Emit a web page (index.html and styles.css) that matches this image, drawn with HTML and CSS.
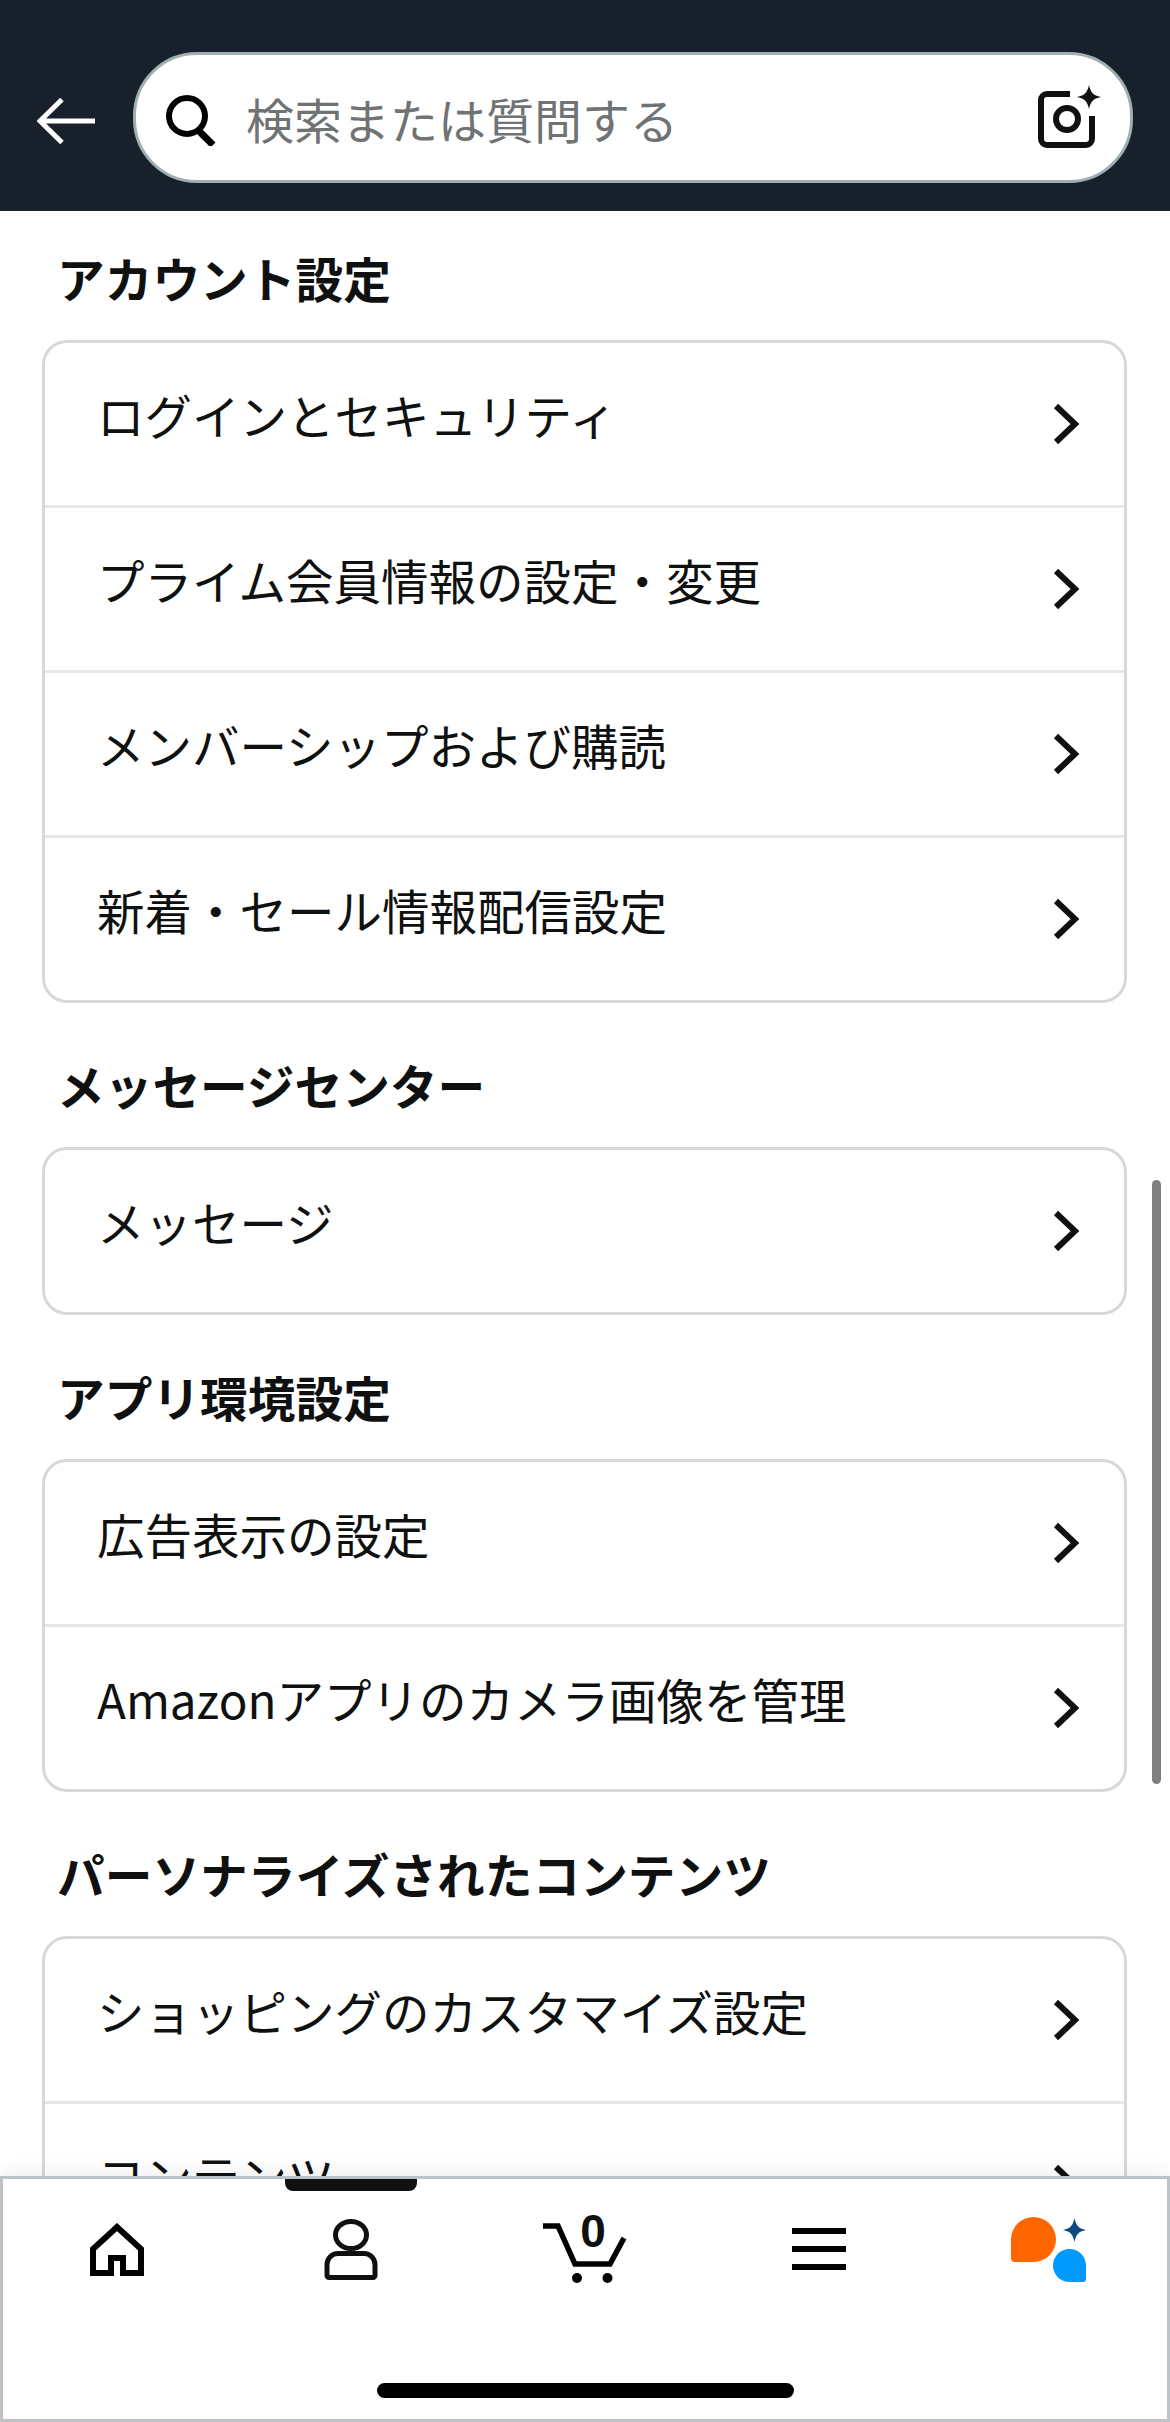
FILE: index.html
```html
<!DOCTYPE html>
<html lang="ja">
<head>
    <meta charset="UTF-8">
    <meta name="viewport" content="width=device-width, initial-scale=1.0">
    <title>アカウント設定</title>
    <link rel="stylesheet" href="styles.css">
</head>
<body>

    <header class="top-bar">
        <svg class="back-icon" viewBox="0 0 58 46" width="58" height="46">
            <path d="M58 23H3M25 1.500 3 23l22 21.500" fill="none" stroke="#fff" stroke-width="5"/>
        </svg>
        <div class="search-box">
            <svg class="search-icon" viewBox="0 0 50 51" width="50" height="51">
                <circle cx="21" cy="21" r="18" fill="none" stroke="#000" stroke-width="6"/>
                <path d="M32 35 47 50" fill="none" stroke="#000" stroke-width="7"/>
            </svg>
            <span class="search-text">検索または質問する</span>
            <svg class="camera-icon" viewBox="0 0 67 67" width="67" height="67">
                <path d="M34 11H11a6 6 0 0 0-6 6V56a6 6 0 0 0 6 6H50a6 6 0 0 0 6-6V33" fill="none" stroke="#0f1111" stroke-width="6"/>
                <circle cx="31" cy="36" r="11" fill="none" stroke="#0f1111" stroke-width="6"/>
                <path d="M53 2c1.500 7 4 10.500 12 12-8 1.500-10.500 5-12 12-1.500-7-4-10.500-12-12 8-1.500 10.500-5 12-12z" fill="#0f1111"/>
            </svg>
        </div>
    </header>

    <main class="content">
        <h2 class="section-title">アカウント設定</h2>
        <div class="card">
            <a class="row"><span class="row-label">ログインとセキュリティ</span><svg class="chevron" viewBox="0 0 28 42"><path d="M4 3l19 18L4 39" fill="none" stroke="#0f1111" stroke-width="6"/></svg></a>
            <a class="row"><span class="row-label">プライム会員情報の設定・変更</span><svg class="chevron" viewBox="0 0 28 42"><path d="M4 3l19 18L4 39" fill="none" stroke="#0f1111" stroke-width="6"/></svg></a>
            <a class="row"><span class="row-label">メンバーシップおよび購読</span><svg class="chevron" viewBox="0 0 28 42"><path d="M4 3l19 18L4 39" fill="none" stroke="#0f1111" stroke-width="6"/></svg></a>
            <a class="row"><span class="row-label">新着・セール情報配信設定</span><svg class="chevron" viewBox="0 0 28 42"><path d="M4 3l19 18L4 39" fill="none" stroke="#0f1111" stroke-width="6"/></svg></a>
        </div>

        <h2 class="section-title">メッセージセンター</h2>
        <div class="card">
            <a class="row"><span class="row-label">メッセージ</span><svg class="chevron" viewBox="0 0 28 42"><path d="M4 3l19 18L4 39" fill="none" stroke="#0f1111" stroke-width="6"/></svg></a>
        </div>

        <h2 class="section-title">アプリ環境設定</h2>
        <div class="card">
            <a class="row"><span class="row-label">広告表示の設定</span><svg class="chevron" viewBox="0 0 28 42"><path d="M4 3l19 18L4 39" fill="none" stroke="#0f1111" stroke-width="6"/></svg></a>
            <a class="row"><span class="row-label">Amazonアプリのカメラ画像を管理</span><svg class="chevron" viewBox="0 0 28 42"><path d="M4 3l19 18L4 39" fill="none" stroke="#0f1111" stroke-width="6"/></svg></a>
        </div>

        <h2 class="section-title">パーソナライズされたコンテンツ</h2>
        <div class="card">
            <a class="row"><span class="row-label">ショッピングのカスタマイズ設定</span><svg class="chevron" viewBox="0 0 28 42"><path d="M4 3l19 18L4 39" fill="none" stroke="#0f1111" stroke-width="6"/></svg></a>
            <a class="row"><span class="row-label">コンテンツ</span><svg class="chevron" viewBox="0 0 28 42"><path d="M4 3l19 18L4 39" fill="none" stroke="#0f1111" stroke-width="6"/></svg></a>
        </div>
    </main>

    <div class="scroll-thumb"></div>

    <nav class="tab-bar">
        <div class="tabs">
            <div class="tab">
                <svg viewBox="0 0 54 53" width="54" height="53">
                    <path d="M3 50V26L27 4 51 26V50H33V35H21V50z" fill="none" stroke="#000" stroke-width="6"/>
                </svg>
            </div>
            <div class="tab tab-active">
                <svg viewBox="0 0 54 61" width="54" height="61">
                    <ellipse cx="27" cy="16" rx="15.500" ry="13.500" fill="none" stroke="#0f1111" stroke-width="5"/>
                    <path d="M14 34.500h26a11 11 0 0 1 11 11v11a2 2 0 0 1-2 2H5a2 2 0 0 1-2-2v-11a11 11 0 0 1 11-11z" fill="#fff" stroke="#0f1111" stroke-width="5"/>
                </svg>
            </div>
            <div class="tab">
                <div class="cart">
                    <svg viewBox="0 0 84 70" width="84" height="70">
                        <path d="M0 12h15l17 38h35l14-26" fill="none" stroke="#000" stroke-width="5.500"/>
                        <circle cx="34" cy="64" r="5" fill="#000"/>
                        <circle cx="64.500" cy="64" r="5" fill="#000"/>
                    </svg>
                    <span class="cart-count">0</span>
                </div>
            </div>
            <div class="tab">
                <svg viewBox="0 0 54 42" width="54" height="42">
                    <path d="M0 3h54M0 21h54M0 39h54" fill="none" stroke="#000" stroke-width="6"/>
                </svg>
            </div>
            <div class="tab">
                <svg class="assistant-icon" viewBox="0 0 75 65" width="75" height="65">
                    <path d="M22.500 0a22.500 22.500 0 0 1 0 45H4a4 4 0 0 1-4-4V22.500A22.500 22.500 0 0 1 22.500 0z" fill="#ff6600"/>
                    <path d="M58.500 32A16.500 16.500 0 0 1 75 48.500V62a3 3 0 0 1-3 3H58.500a16.500 16.500 0 0 1 0-33z" fill="#0099ff"/>
                    <path d="M63.500 1c1.500 7 3.500 10.500 11.500 12-8 1.500-10 5-11.500 12-1.500-7-3.500-10.500-11.500-12 8-1.500 10-5 11.500-12z" fill="#0a4a7e"/>
                </svg>
            </div>
        </div>
        <div class="home-indicator"></div>
    </nav>

</body>
</html>
```

FILE: styles.css
```css
body {
    font-family: "Noto Sans CJK JP", "Liberation Sans", sans-serif;
    background-color: white;
    color: #0f1111;
    display: flex;
    flex-direction: column;
    width: 1170px;
    height: 2422px;
    margin: 0;
    overflow: hidden;
    position: relative;
}
.top-bar {
    background-color: #18202b;
    height: 211px;
    flex-shrink: 0;
    box-sizing: border-box;
    display: flex;
    align-items: flex-start;
    padding: 52px 37px 0;
    gap: 38px;
}
.back-icon {
    margin-top: 46px;
    flex-shrink: 0;
}
.search-box {
    background: white;
    border: 3px solid #9fb0b2;
    border-radius: 64px;
    width: 1000px;
    height: 131px;
    box-sizing: border-box;
    display: flex;
    align-items: center;
    padding: 0 27px 0 30px;
}
.search-icon {
    flex-shrink: 0;
    margin-top: 5px;
}
.search-text {
    margin-left: 30px;
    font-size: 48px;
    line-height: 60px;
    color: #6f7373;
    flex: 1;
}
.camera-icon {
    flex-shrink: 0;
    margin-bottom: 2px;
}
.content {
    flex: 1;
    min-height: 0;
    overflow: hidden;
    padding: 37px 43px 0 42px;
}
.section-title {
    font-size: 47.700px;
    line-height: 60px;
    font-weight: 700;
    margin: 52px 0 32px 15px;
}
.section-title:first-child {
    margin-top: 0;
}
.card {
    background: white;
    border: 3px solid #d5d9d9;
    border-radius: 25px;
    overflow: hidden;
}
.row {
    display: flex;
    justify-content: space-between;
    align-items: center;
    height: 162px;
    padding: 0 44px 0 52px;
    border-top: 3px solid #e7e7e7;
}
.row:first-child {
    border-top: none;
}
.row-label {
    font-size: 47.500px;
    line-height: 60px;
    margin-bottom: 18px;
}
.chevron {
    width: 28px;
    height: 42px;
}
.scroll-thumb {
    position: absolute;
    left: 1152px;
    top: 1180px;
    width: 9px;
    height: 604px;
    border-radius: 5px;
    background: #808080;
}
.tab-bar {
    position: relative;
    flex-shrink: 0;
    height: 246px;
    box-sizing: border-box;
    background: white;
    border: 3px solid #bcc3c6;
    box-shadow: 0 -6px 18px rgba(15, 17, 17, 0.06);
}
.tabs {
    display: grid;
    grid-template-columns: repeat(5, 234px);
    margin: 0 -3px;
}
.tab {
    display: flex;
    justify-content: center;
    align-items: center;
    height: 140px;
    position: relative;
}
.tab-active::before {
    content: "";
    position: absolute;
    top: 0;
    width: 132px;
    height: 12px;
    background: #0f1111;
    border-radius: 0 0 8px 8px;
}
.cart {
    position: relative;
    width: 84px;
    height: 70px;
}
.cart-count {
    position: absolute;
    left: 35px;
    top: -8px;
    width: 30px;
    font-family: "Liberation Sans", sans-serif;
    font-size: 46px;
    line-height: 50px;
    font-weight: 700;
    text-align: center;
    color: #0f1111;
}
.assistant-icon {
    margin-right: 9px;
}
.home-indicator {
    position: absolute;
    left: 374px;
    bottom: 21px;
    width: 417px;
    height: 15px;
    background: #000;
    border-radius: 8px;
}
```
